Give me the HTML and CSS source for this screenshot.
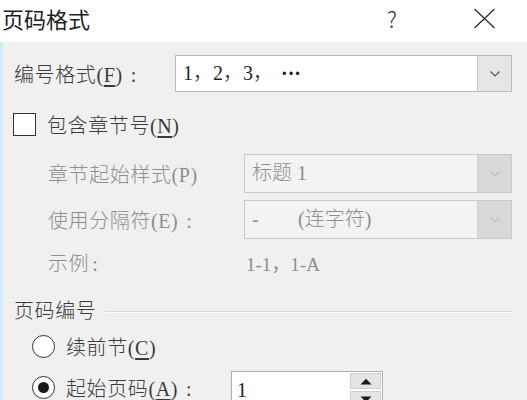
FILE: index.html
```html
<!DOCTYPE html>
<html lang="zh-CN">
<head>
<meta charset="utf-8">
<title>页码格式</title>
<link rel="stylesheet" href="styles.css">
</head>
<body>
<div class="dialog">
  <div class="titlebar">
    <div class="title">页码格式</div>
    <div class="help">?</div>
    <div class="close">
      <svg width="23" height="21" viewBox="0 0 23 21"><path d="M1.5 1L21.5 20M21.5 1L1.5 20" stroke="#2b2b2b" stroke-width="1.3" fill="none"/></svg>
    </div>
  </div>
  <div class="content">
    <div class="row row-format">
      <div class="label label-main">编号格式(<u>F</u>)<span class="colon">:</span></div>
      <div class="select">
        <div class="select-text">1，2，3，<span class="dots">···</span></div>
        <div class="select-btn">
          <svg width="12" height="8" viewBox="0 0 12 8"><path d="M1.5 1.5L6 6L10.5 1.5" stroke="#555" stroke-width="1.2" fill="none"/></svg>
        </div>
      </div>
    </div>

    <div class="row row-check">
      <div class="checkbox"></div>
      <div class="label">包含章节号(<u>N</u>)</div>
    </div>

    <div class="row row-sub row-style">
      <div class="label label-sub disabled">章节起始样式(P)</div>
      <div class="select select-disabled">
        <div class="select-text">标题 1</div>
        <div class="select-btn">
          <svg width="12" height="8" viewBox="0 0 12 8"><path d="M1.5 1.5L6 6L10.5 1.5" stroke="#bdbdbd" stroke-width="1.2" fill="none"/></svg>
        </div>
      </div>
    </div>

    <div class="row row-sub row-sep">
      <div class="label label-sub disabled">使用分隔符(E)<span class="colon">:</span></div>
      <div class="select select-disabled">
        <div class="select-text"><span class="dash">-</span>(连字符)</div>
        <div class="select-btn">
          <svg width="12" height="8" viewBox="0 0 12 8"><path d="M1.5 1.5L6 6L10.5 1.5" stroke="#bdbdbd" stroke-width="1.2" fill="none"/></svg>
        </div>
      </div>
    </div>

    <div class="row row-sub row-example">
      <div class="label label-sub disabled">示例<span class="colon colon-tight">:</span></div>
      <div class="example disabled">1-1，1-A</div>
    </div>

    <div class="group">
      <div class="group-title">页码编号</div>
      <div class="group-line"></div>
    </div>

    <div class="row row-radio row-cont">
      <div class="radio"></div>
      <div class="label">续前节(<u>C</u>)</div>
    </div>

    <div class="row row-radio row-start">
      <div class="radio"><div class="dot"></div></div>
      <div class="label label-start">起始页码(<u>A</u>)<span class="colon">:</span></div>
      <div class="spin">
        <div class="spin-text">1</div>
        <div class="spin-btns">
          <div class="spin-btn"><svg width="12" height="7" viewBox="0 0 12 7"><path d="M0.5 6.5L6 0.8L11.5 6.5Z" fill="#1a1a1a"/></svg></div>
          <div class="spin-btn"><svg width="12" height="7" viewBox="0 0 12 7"><path d="M0.5 0.5L6 6.2L11.5 0.5Z" fill="#1a1a1a"/></svg></div>
        </div>
      </div>
    </div>
  </div>
</div>
</body>
</html>
```

FILE: styles.css
```css
html, body {
  margin: 0;
  padding: 0;
}
body {
  width: 527px;
  height: 400px;
  overflow: hidden;
  background: #f0f0f0;
  font-family: "Liberation Serif", "Noto Sans CJK SC", serif;
  color: #3a3a3a;
}
.dialog {
  width: 527px;
  height: 400px;
  display: flex;
  flex-direction: column;
}
.titlebar {
  height: 42px;
  background: #ffffff;
  display: flex;
  align-items: center;
  flex: none;
}
.title {
  font-family: "Noto Sans CJK SC", sans-serif;
  font-size: 22px;
  color: #1e1e1e;
  padding-left: 2px;
  margin-top: -6px;
  flex: 1;
}
.help {
  font-family: "Noto Sans CJK SC", sans-serif;
  font-size: 22px;
  color: #2b2b2b;
  width: 20px;
  margin-right: 66px;
  margin-top: -6px;
  font-weight: 300;
}
.close {
  width: 23px;
  height: 21px;
  margin-right: 31px;
  margin-top: -6px;
}
.content {
  flex: 1;
  border-left: 3px solid #cfeaf8;
  padding: 13px 15px 0 11px;
}
.row {
  display: flex;
  align-items: center;
}
.label {
  font-size: 20px;
  white-space: nowrap;
  font-weight: 300;
  letter-spacing: 0.6px;
}
.label u {
  text-underline-offset: 3px;
}
.colon {
  display: inline-block;
  padding-left: 8px;
}
.colon-tight {
  padding-left: 3px;
}
.label-main {
  width: 161px;
  flex: none;
}
.disabled {
  color: #8e8e8e;
}
.select {
  flex: 1;
  display: flex;
  background: #ffffff;
  border: 1px solid #b9b9b9;
  height: 35px;
}
.select-text {
  flex: 1;
  font-size: 20px;
  padding-left: 7px;
  line-height: 35px;
  color: #222;
  white-space: nowrap;
  font-weight: 300;
}
.dots {
  display: inline-block;
  font-weight: bold;
  padding-left: 8px;
}
.select-btn {
  width: 33px;
  background: #e6e6e6;
  border-left: 1px solid #c9c9c9;
  display: flex;
  align-items: center;
  justify-content: center;
}
.row-format {
  height: 37px;
}
.row-check {
  margin-top: 20px;
  height: 24px;
}
.checkbox {
  width: 21px;
  height: 21px;
  border: 1.5px solid #333;
  background: #fff;
  margin-left: -1px;
  margin-right: 11px;
}
.row-sub {
  padding-left: 34px;
}
.label-sub {
  width: 196px;
  flex: none;
}
.row-style {
  margin-top: 18px;
}
.row-sep {
  margin-top: 7px;
}
.select-disabled {
  background: #f3f3f3;
  border-color: #c9c9c9;
  height: 37px;
}
.select-disabled .select-text {
  color: #8e8e8e;
  line-height: 37px;
}
.select-disabled .select-btn {
  background: #d9d9d9;
  border-left-color: #d0d0d0;
}
.dash {
  display: inline-block;
  width: 46px;
}
.row-example {
  height: 34px;
  margin-top: 6px;
}
.example {
  font-size: 19px;
  padding-left: 2px;
}
.group {
  display: flex;
  align-items: center;
  margin-top: 15px;
  height: 30px;
}
.group-title {
  font-size: 20px;
  font-weight: 300;
  color: #3a3a3a;
  letter-spacing: 0.6px;
}
.group-line {
  flex: 1;
  height: 1px;
  background: #d8d8d8;
  border-bottom: 1px solid #fafafa;
  margin-left: 9px;
  margin-top: 6px;
}
.row-radio {
  padding-left: 18px;
  height: 30px;
}
.row-cont {
  margin-top: 7px;
}
.row-start {
  margin-top: 11px;
}
.radio {
  width: 21px;
  height: 21px;
  border: 1.5px solid #333;
  border-radius: 50%;
  background: #fff;
  margin-right: 11px;
  display: flex;
  align-items: center;
  justify-content: center;
  flex: none;
}
.dot {
  width: 11px;
  height: 11px;
  border-radius: 50%;
  background: #1a1a1a;
}
.label-start {
  width: 165px;
  flex: none;
}
.spin {
  display: flex;
  width: 150px;
  height: 36px;
  border: 1px solid #b0b0b0;
  background: #fff;
  margin-top: -1px;
  align-self: flex-start;
  flex: none;
}
.spin-text {
  flex: 1;
  font-size: 20px;
  padding-left: 5px;
  line-height: 36px;
  color: #222;
}
.spin-btns {
  width: 31px;
  display: flex;
  flex-direction: column;
  gap: 2px;
  padding: 1px;
}
.spin-btn {
  flex: 1;
  background: #e4e4e4;
  border: 1px solid #cfcfcf;
  display: flex;
  align-items: center;
  justify-content: center;
}
```
